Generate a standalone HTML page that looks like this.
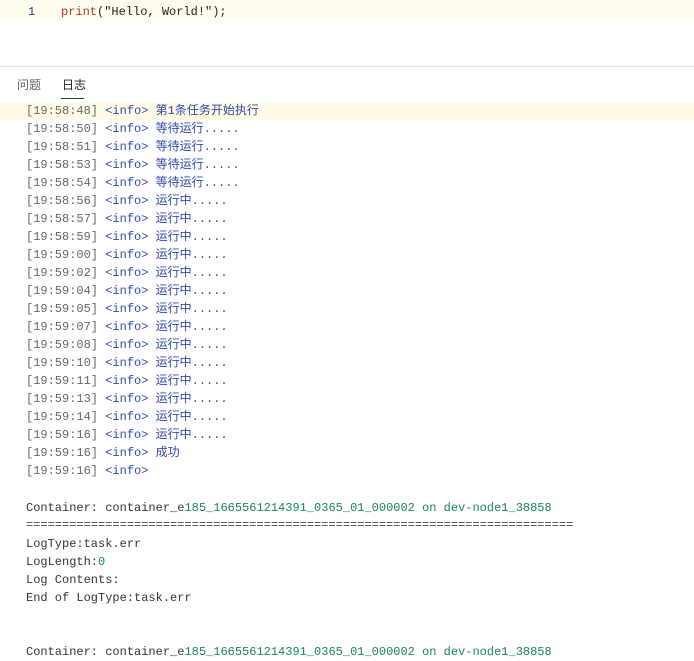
<!DOCTYPE html>
<html><head><meta charset="utf-8"><style>
body{margin:0;width:694px;height:653px;overflow:hidden;background:#fff;position:relative;font-family:"Liberation Mono","Noto Sans CJK SC",monospace;font-size:12px}
.l{position:absolute;left:26px;height:18px;line-height:18px;white-space:pre;color:#333}
.t{color:#666}.i{color:#3048b0}.g{color:#17875f}
</style></head><body>
<div style="position:absolute;left:0;top:0;width:694px;height:21px;background:#fffdf0"></div>
<div class="l" style="left:28px;top:3px;color:#2a3a8a">1</div>
<div class="l" style="left:61px;top:3px;color:#222"><span style="color:#c4302b">print</span>("Hello, World!");</div>
<div style="position:absolute;left:0;top:66px;width:694px;height:1px;background:#ddd"></div>
<div style="position:absolute;left:17px;top:76px;font:12px 'Liberation Sans','Noto Sans CJK SC',sans-serif;color:#666">问题</div>
<div style="position:absolute;left:62px;top:76px;font:12px 'Liberation Sans','Noto Sans CJK SC',sans-serif;color:#222">日志</div>
<div style="position:absolute;left:61px;top:98px;width:23px;height:1px;background:#333"></div>
<div style="position:absolute;left:0;top:102px;width:694px;height:18px;background:#fffbe6"></div>
<div id="c"></div>
<script>
var rows=[["19:58:48","第1条任务开始执行"],["19:58:50","等待运行....."],["19:58:51","等待运行....."],["19:58:53","等待运行....."],["19:58:54","等待运行....."],["19:58:56","运行中....."],["19:58:57","运行中....."],["19:58:59","运行中....."],["19:59:00","运行中....."],["19:59:02","运行中....."],["19:59:04","运行中....."],["19:59:05","运行中....."],["19:59:07","运行中....."],["19:59:08","运行中....."],["19:59:10","运行中....."],["19:59:11","运行中....."],["19:59:13","运行中....."],["19:59:14","运行中....."],["19:59:16","运行中....."],["19:59:16","成功"],["19:59:16",""]];
var h="";rows.forEach(function(r,k){h+='<div class="l" style="top:'+(102+18*k)+'px"><span class="t">['+r[0]+']</span> <span class="i">&lt;info&gt; '+r[1]+'</span></div>';});
var cont='Container: container_e<span class="g">185_1665561214391_0365_01_000002 on dev-node1_38858</span>';
var y=499;
h+='<div class="l" style="top:'+y+'px">'+cont+'</div>';
h+='<div class="l" style="top:'+(y+17)+'px;color:#444">'+"=".repeat(76)+'</div>';
h+='<div class="l" style="top:'+(y+36)+'px">LogType:task.err</div>';
h+='<div class="l" style="top:'+(y+54)+'px">LogLength:<span class="g">0</span></div>';
h+='<div class="l" style="top:'+(y+72)+'px">Log Contents:</div>';
h+='<div class="l" style="top:'+(y+90)+'px">End of LogType:task.err</div>';
h+='<div class="l" style="top:'+(y+144)+'px">'+cont+'</div>';
document.getElementById("c").innerHTML=h;
</script>
</body></html>
